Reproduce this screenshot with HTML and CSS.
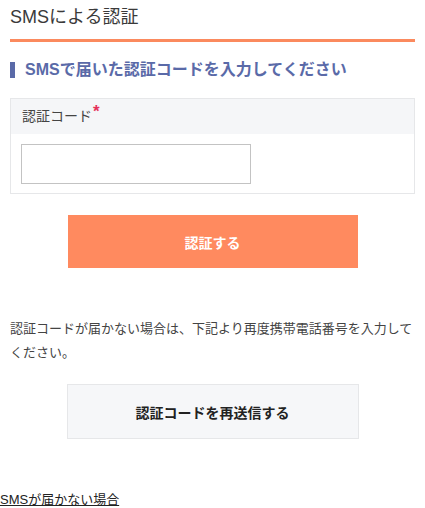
FILE: index.html
```html
<!DOCTYPE html>
<html>
    <head>
        <title>SMSによる認証</title>
        <meta name="viewport" content="width=device-width, initial-scale=1.0">
        <link rel="stylesheet" href="styles.css">
    </head>
    <body>
        <div class="content">
            <h1 class="page-title">SMSによる認証</h1>
            <h2 class="section-title">SMSで届いた認証コードを入力してください</h2>
            <div class="field-box">
                <div class="field-label">認証コード<span class="required">*</span></div>
                <div class="field-body">
                    <input type="text" class="code-input">
                </div>
            </div>
            <button class="btn-primary">認証する</button>
            <p class="note">認証コードが届かない場合は、下記より再度携帯電話番号を入力してください。</p>
            <button class="btn-secondary">認証コードを再送信する</button>
        </div>
        <a href="#" class="help-link">SMSが届かない場合</a>
    </body>
</html>
```

FILE: styles.css
```css
body {
    margin: 0;
    font-family: "Liberation Sans", "Noto Sans CJK JP", sans-serif;
    color: #333;
    background-color: #fff;
}

.content {
    padding: 0 10px;
}

.page-title {
    margin: 0;
    padding: 4px 0 9px;
    font-size: 18px;
    font-weight: normal;
    line-height: 26px;
    color: #3a3a3a;
    border-bottom: 3px solid #fb8a5e;
}

.section-title {
    margin: 20px 0 20px;
    padding-left: 10px;
    border-left: 5px solid #5a6aa8;
    font-size: 16px;
    line-height: 16px;
    color: #5a6aa8;
}

.field-box {
    border: 1px solid #e6e7e9;
}

.field-label {
    height: 35px;
    padding: 0 11px;
    line-height: 35px;
    font-size: 14px;
    background-color: #f5f6f8;
    color: #444;
}

.required {
    color: #e5315a;
    font-size: 17px;
    font-weight: bold;
    line-height: 0;
    position: relative;
    top: -4px;
    margin-left: 1px;
}

.field-body {
    padding: 10px 10px 9px;
}

.code-input {
    display: block;
    box-sizing: border-box;
    width: 230px;
    height: 40px;
    margin: 0;
    border: 1px solid #c3c3c3;
    border-radius: 0;
    font-size: 14px;
}

.btn-primary {
    display: block;
    width: 290px;
    height: 53px;
    margin: 21px auto 0;
    border: none;
    background-color: #ff8a5f;
    color: #fff;
    font-family: inherit;
    font-size: 14px;
    font-weight: bold;
    cursor: pointer;
}

.note {
    margin: 49px 0 0;
    font-size: 13px;
    line-height: 24px;
    color: #444;
}

.btn-secondary {
    display: block;
    box-sizing: border-box;
    width: 292px;
    height: 55px;
    margin: 19px auto 0;
    border: 1px solid #e6e7e9;
    background-color: #f6f7f9;
    color: #222;
    font-family: inherit;
    font-size: 14px;
    font-weight: bold;
    cursor: pointer;
}

.help-link {
    display: inline-block;
    margin-top: 51px;
    font-size: 13px;
    line-height: 20px;
    color: #222;
}
```
